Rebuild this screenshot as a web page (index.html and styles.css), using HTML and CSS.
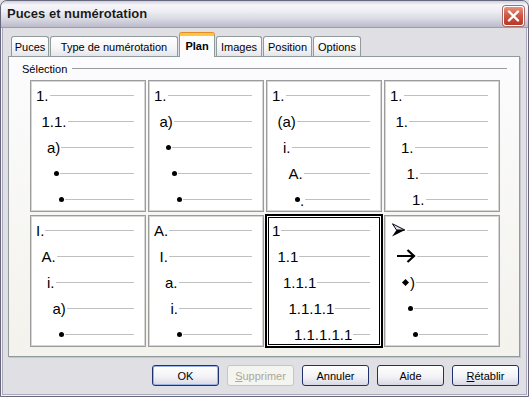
FILE: index.html
```html
<!DOCTYPE html>
<html lang="fr">
<head>
    <meta charset="UTF-8">
    <title>Puces et numérotation</title>
    <link rel="stylesheet" href="styles.css">
</head>
<body>
    <div class="window">
        <div class="titlebar">
            <span class="title">Puces et numérotation</span>
            <div class="close">
                <svg width="19" height="18" viewBox="0 0 19 18"><path d="M5 4.5 L14 13.5 M14 4.5 L5 13.5" stroke="#fff" stroke-width="2.4" stroke-linecap="round"/></svg>
            </div>
        </div>
        <div class="dialog">
            <div class="tabs">
                <div class="tab t-puces">Puces</div>
                <div class="tab t-type">Type de numérotation</div>
                <div class="tab t-plan active">Plan</div>
                <div class="tab t-images">Images</div>
                <div class="tab t-position">Position</div>
                <div class="tab t-options">Options</div>
            </div>
            <div class="page">
                <div class="group-title"><span>Sélection</span></div>
                <div class="grid">
                    <div class="cell">
                        <div class="row"><span>1.</span><i class="rule"></i></div>
                        <div class="row l1"><span>1.1.</span><i class="rule"></i></div>
                        <div class="row l2"><span>a)</span><i class="rule"></i></div>
                        <div class="row l3"><i class="dot"></i><i class="rule"></i></div>
                        <div class="row l4"><i class="dot"></i><i class="rule"></i></div>
                    </div>
                    <div class="cell">
                        <div class="row"><span>1.</span><i class="rule"></i></div>
                        <div class="row l1"><span>a)</span><i class="rule"></i></div>
                        <div class="row l2"><i class="dot"></i><i class="rule"></i></div>
                        <div class="row l3"><i class="dot"></i><i class="rule"></i></div>
                        <div class="row l4"><i class="dot"></i><i class="rule"></i></div>
                    </div>
                    <div class="cell">
                        <div class="row"><span>1.</span><i class="rule"></i></div>
                        <div class="row l1"><span>(a)</span><i class="rule"></i></div>
                        <div class="row l2"><span>i.</span><i class="rule"></i></div>
                        <div class="row l3"><span>A.</span><i class="rule"></i></div>
                        <div class="row l4"><i class="dot"></i><span>.</span><i class="rule"></i></div>
                    </div>
                    <div class="cell">
                        <div class="row"><span>1.</span><i class="rule"></i></div>
                        <div class="row l1"><span>1.</span><i class="rule"></i></div>
                        <div class="row l2"><span>1.</span><i class="rule"></i></div>
                        <div class="row l3"><span>1.</span><i class="rule"></i></div>
                        <div class="row l4"><span>1.</span><i class="rule"></i></div>
                    </div>
                    <div class="cell">
                        <div class="row"><span>I.</span><i class="rule"></i></div>
                        <div class="row l1"><span>A.</span><i class="rule"></i></div>
                        <div class="row l2"><span>i.</span><i class="rule"></i></div>
                        <div class="row l3"><span>a)</span><i class="rule"></i></div>
                        <div class="row l4"><i class="dot"></i><i class="rule"></i></div>
                    </div>
                    <div class="cell">
                        <div class="row"><span>A.</span><i class="rule"></i></div>
                        <div class="row l1"><span>I.</span><i class="rule"></i></div>
                        <div class="row l2"><span>a.</span><i class="rule"></i></div>
                        <div class="row l3"><span>i.</span><i class="rule"></i></div>
                        <div class="row l4"><i class="dot"></i><i class="rule"></i></div>
                    </div>
                    <div class="cell selected">
                        <div class="row"><span>1</span><i class="rule"></i></div>
                        <div class="row l1"><span>1.1</span><i class="rule"></i></div>
                        <div class="row l2"><span>1.1.1</span><i class="rule"></i></div>
                        <div class="row l3"><span>1.1.1.1</span><i class="rule"></i></div>
                        <div class="row l4"><span>1.1.1.1.1</span><i class="rule"></i></div>
                    </div>
                    <div class="cell">
                        <div class="row">
                            <svg class="arrowhead" width="15" height="14" viewBox="0 0 15 14">
                                <path d="M1.5 0.8 L13.8 7 L5.5 7 Z" fill="#dfe8f6" stroke="#000" stroke-width="1"/>
                                <path d="M5.5 7 L14 7 L1 13.5 Z" fill="#000"/>
                            </svg>
                            <i class="rule"></i>
                        </div>
                        <div class="row l1">
                            <svg class="arrow" width="19" height="14" viewBox="0 0 19 14">
                                <path d="M0 7 H17 M10.5 1 L17 7 L10.5 13" fill="none" stroke="#000" stroke-width="2.2"/>
                            </svg>
                            <i class="rule"></i>
                        </div>
                        <div class="row l2"><i class="diamond"></i><span>)</span><i class="rule"></i></div>
                        <div class="row l3"><i class="dot"></i><i class="rule"></i></div>
                        <div class="row l4"><i class="dot"></i><i class="rule"></i></div>
                    </div>
                </div>
            </div>
            <div class="buttons">
                <button class="btn default">OK</button>
                <button class="btn" disabled><u>S</u>upprimer</button>
                <button class="btn">Annuler</button>
                <button class="btn">Aide</button>
                <button class="btn"><u>R</u>établir</button>
            </div>
        </div>
    </div>
</body>
</html>
```

FILE: styles.css
```css
* { margin: 0; padding: 0; box-sizing: border-box; }
body { background: #e0dfe3; font-family: "Liberation Sans", Arial, sans-serif; }

.window {
    width: 529px;
    height: 397px;
    background: #e0dfe3;
    border: 1px solid #66667c;
    border-radius: 7px 7px 0 0;
    box-shadow: inset 0 0 0 1px #f4f4f8, inset 0 0 0 2px #a9a9bb;
    overflow: hidden;
}

/* title bar */
.titlebar {
    height: 27px;
    display: flex;
    justify-content: space-between;
    align-items: flex-start;
    padding: 3px 4px 0 6px;
    border-radius: 6px 6px 0 0;
    background: linear-gradient(to bottom, #cfcfdc 0, #f7f7fa 4px, #eeeef3 10px, #d9d9e3 18px, #b6b6c8 27px);
    border-bottom: 1px solid #9d9db0;
}
.title { font-size: 13px; font-weight: bold; color: #1a1a1a; line-height: 20px; text-shadow: 0 0 1px #fff; }
.close {
    width: 21px;
    height: 20px;
    margin-top: 2px;
    border: 1px solid #fff;
    border-radius: 3px;
    background: linear-gradient(to bottom, #e9927f, #cf5a48 45%, #b8372a);
    box-shadow: 0 0 0 1px #a96a6a;
    display: flex;
    align-items: center;
    justify-content: center;
}

.dialog { padding: 5px 8px 0 7px; }

/* tabs */
.tabs { display: flex; align-items: flex-end; gap: 1px; height: 23px; padding-left: 3px; position: relative; z-index: 1; }
.tab {
    height: 20px;
    display: flex;
    align-items: center;
    justify-content: center;
    font-size: 11px;
    color: #000;
    border: 1px solid #919b9c;
    border-bottom: none;
    border-radius: 3px 3px 0 0;
    background: linear-gradient(to bottom, #ffffff, #f5f5f8 60%, #e4e4ec);
}
.t-puces { width: 38px; }
.t-type { width: 128px; }
.t-plan { width: 36px; }
.t-images { width: 46px; }
.t-position { width: 49px; }
.t-options { width: 48px; }
.tab.active {
    height: 24px;
    margin-bottom: -1px;
    padding-bottom: 2px;
    font-weight: bold;
    background: #fcfcfe;
    border-top: 3px solid #ffc73c;
    box-shadow: 0 -1px 0 #e68b2c;
}

/* tab page */
.page {
    width: 512px;
    height: 301px;
    padding: 5px 12px 0 13px;
    border: 1px solid #919b9c;
    background: linear-gradient(to bottom, #fcfcfe, #f3f2ec);
    box-shadow: 1px 1px 0 #c5c5c9;
}
.group-title { display: flex; align-items: center; height: 13px; font-size: 11px; color: #000; }
.group-title::after { content: ""; flex: 1; height: 1px; background: #9a9a9a; margin-left: 5px; }

.grid {
    display: grid;
    grid-template-columns: repeat(4, 116px);
    grid-template-rows: 132px 132px;
    column-gap: 2px;
    row-gap: 3px;
    margin: 5px 0 0 8px;
}
.cell {
    background: #fff;
    border: 1px solid #9c9c9c;
    box-shadow: inset 0 0 0 1px #d6d6d6;
    padding: 1px 11px 0 5px;
    overflow: hidden;
}
.cell.selected {
    border-color: #000;
    outline: 1px solid #000;
    box-shadow: inset 0 0 0 1px #fff, inset 0 0 0 2px #000;
}

.row { display: flex; align-items: center; height: 26px; font-size: 15px; line-height: 17px; color: #000; }
.row span { white-space: nowrap; }
.row.l1 { padding-left: 5.5px; }
.row.l2 { padding-left: 11px; }
.row.l3 { padding-left: 16.5px; }
.row.l4 { padding-left: 22px; }
.rule { flex: 1; min-width: 4px; height: 1px; background: #c0c0c0; margin-left: 1px; }

.dot { display: inline-block; width: 5px; height: 5px; border-radius: 50%; background: #000; margin-left: 1px; }
.dot + span { align-self: flex-end; line-height: 17px; margin-bottom: 3px; }
.arrowhead { margin-left: 1px; }
.arrow { margin-left: 1px; }
.diamond { display: inline-block; width: 5px; height: 5px; background: #000; transform: rotate(45deg); margin: 0 2px 0 2px; }

/* bottom buttons */
.buttons { display: flex; justify-content: flex-end; gap: 8px; margin-top: 8px; padding-right: 1px; }
.btn {
    width: 67px;
    height: 21px;
    font-family: "Liberation Sans", Arial, sans-serif;
    font-size: 11px;
    color: #000;
    border: 1px solid #21316b;
    border-radius: 3px;
    background: linear-gradient(to bottom, #ffffff, #f3f3f7 55%, #d8d8e4);
}
.btn.default { box-shadow: inset 0 0 0 1px #98b4e8; }
.btn:disabled { color: #aca899; border-color: #c9c7ba; background: #f4f4f0; }
```
